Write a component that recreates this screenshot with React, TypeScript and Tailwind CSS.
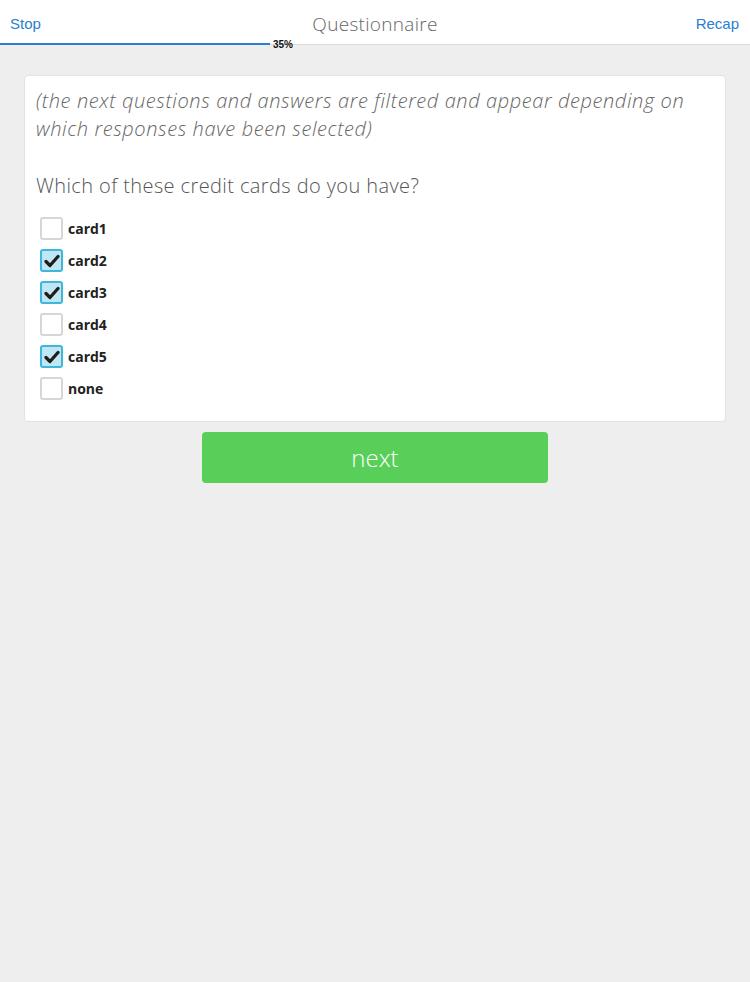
import React from "react";

const items = [
  { label: "card1", checked: false },
  { label: "card2", checked: true },
  { label: "card3", checked: true },
  { label: "card4", checked: false },
  { label: "card5", checked: true },
  { label: "none", checked: false },
];

function Box({ checked }: { checked: boolean }) {
  return checked ? (
    <div className="w-[23px] h-[23px] rounded-[3px] border-2 border-[#3db8d8] bg-[#bfe6f2] flex items-center justify-center">
      <svg width="16" height="14" viewBox="0 0 16 14">
        <path d="M2 7.5 L6 11.5 L14 2.5" fill="none" stroke="#1d1d1d" strokeWidth="3.2" strokeLinecap="round" strokeLinejoin="round" />
      </svg>
    </div>
  ) : (
    <div className="w-[23px] h-[23px] rounded-[3px] border-2 border-[#d6d6d6] bg-white" />
  );
}

export default function App() {
  return (
    <div className="min-h-[982px] bg-[#eeeeee]" style={{ fontFamily: '"Open Sans", "Noto Sans", sans-serif' }}>
      <div className="relative h-[45px] bg-white border-b border-[#d9d9d9] flex items-center justify-between px-[10px] pt-[5px]">
        <span className="text-[15px] text-[#2a80d0]" style={{ fontFamily: '"Liberation Sans", sans-serif' }}>Stop</span>
        <span className="absolute left-0 right-0 text-center text-[19px] font-light text-[#666] top-[10px] pointer-events-none tracking-[0.3px]">Questionnaire</span>
        <span className="text-[15px] text-[#2a80d0] mr-[1px]" style={{ fontFamily: '"Liberation Sans", sans-serif' }}>Recap</span>
        <div className="absolute left-0 bottom-[-1px] h-[2px] w-[270px] bg-[#2a7fd0]" />
        <span className="absolute left-[273px] bottom-[-6px] text-[10px] font-bold text-[#111] leading-none" style={{ fontFamily: '"Liberation Sans", sans-serif' }}>35%</span>
      </div>
      <div className="pt-[30px] px-[24px]">
        <div className="bg-white border border-[#e2e2e2] rounded-[4px] pl-[11px] pr-[12px] pt-[11px] pb-[21px]">
          <p className="text-[20px] italic font-light text-[#666] leading-[28px] tracking-[0.6px]">
            (the next questions and answers are filtered and appear depending on
            <br />
            which responses have been selected)
          </p>
          <p className="mt-[29px] text-[20px] font-light text-[#555] leading-[28px] tracking-[0.4px]">Which of these credit cards do you have?</p>
          <div className="mt-[17px] flex flex-col gap-[9px] pl-[4px]">
            {items.map((it) => (
              <div key={it.label} className="flex items-center gap-[5px] h-[23px]">
                <Box checked={it.checked} />
                <span className="text-[14px] font-bold text-[#222]">{it.label}</span>
              </div>
            ))}
          </div>
        </div>
        <div className="flex justify-center mt-[10px]">
          <button className="w-[346px] h-[51px] rounded-[4px] bg-[#57cf59] text-white text-[24px] font-light">next</button>
        </div>
      </div>
    </div>
  );
}
